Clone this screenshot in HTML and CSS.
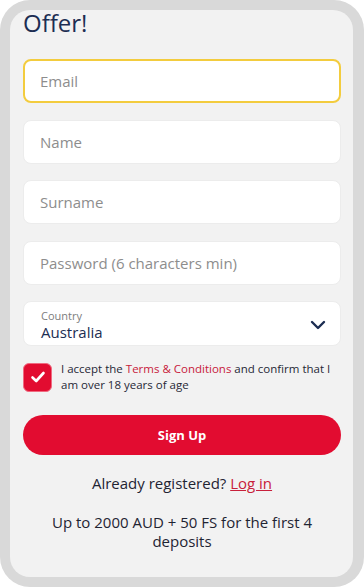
FILE: index.html
```html
<!DOCTYPE html>
<html lang="en">
<head>
<meta charset="utf-8">
<link rel="stylesheet" href="styles.css">
</head>
<body>
<div class="frame">
  <div class="panel">
    <h1 class="title">Offer!</h1>
    <div class="fields">
      <input class="field field--active" type="text" placeholder="Email">
      <input class="field" type="text" placeholder="Name">
      <input class="field" type="text" placeholder="Surname">
      <input class="field" type="text" placeholder="Password (6 characters min)">
      <div class="select">
        <div class="select-text">
          <span class="select-label">Country</span>
          <span class="select-value">Australia</span>
        </div>
        <svg class="chevron" width="16" height="10" viewBox="0 0 16 10"><path d="M2 2 L8 8 L14 2" fill="none" stroke="#1c2d52" stroke-width="2.4" stroke-linecap="round" stroke-linejoin="round"/></svg>
      </div>
    </div>
    <div class="consent">
      <span class="checkbox">
        <svg width="16" height="14" viewBox="0 0 16 14"><path d="M2.5 7.5 L6.2 11 L13.5 3" fill="none" stroke="#fff" stroke-width="2.6" stroke-linecap="round" stroke-linejoin="round"/></svg>
      </span>
      <p class="consent-text">I accept the <a class="link" href="#">Terms &amp; Conditions</a> and confirm that I am over 18 years of age</p>
    </div>
    <button class="signup" type="button">Sign Up</button>
    <p class="login">Already registered? <a class="login-link" href="#">Log in</a></p>
    <p class="bonus">Up to 2000 AUD + 50 FS for the first 4 deposits</p>
  </div>
</div>
</body>
</html>
```

FILE: styles.css
```css
* { box-sizing: border-box; }
html, body { margin: 0; padding: 0; background: #ffffff; }
body { font-family: "Open Sans", "Noto Sans", sans-serif; }

.frame {
  width: 364px;
  height: 587px;
  background: #d9d9d9;
  border-radius: 30px;
  padding: 10px 11px 10px 10px;
}
.panel {
  height: 567px;
  background: #f2f2f2;
  border-radius: 20px;
  padding: 0 12px 0 13px;
}
.title {
  margin: 0;
  font-size: 24px;
  line-height: 26px;
  font-weight: 400;
  color: #1c2d52;
}
.fields {
  margin-top: 23px;
  display: flex;
  flex-direction: column;
  gap: 16.5px;
}
.field {
  display: block;
  width: 100%;
  height: 44px;
  border: 1px solid #ececec;
  border-radius: 8px;
  background: #ffffff;
  padding: 0 16px;
  font-family: inherit;
  font-size: 15px;
  color: #333;
  outline: none;
}
.field::placeholder { color: #8d8d8d; }
.field--active { border: 2px solid #f3cc3e; padding: 0 15px; }

.select {
  height: 45px;
  background: #ffffff;
  border: 1px solid #ececec;
  border-radius: 8px;
  display: flex;
  align-items: center;
  justify-content: space-between;
  padding: 2px 14px 0 17px;
}
.select-text { display: flex; flex-direction: column; }
.select-label { font-size: 11px; line-height: 15px; color: #7d7d7d; }
.select-value { font-size: 15px; line-height: 19px; color: #1c2d52; }

.consent {
  margin-top: 15px;
  display: flex;
  align-items: center;
  gap: 9px;
}
.checkbox {
  flex: none;
  width: 29px;
  height: 29px;
  border-radius: 6px;
  background: #e20c30;
  border: 1px solid #f06a80;
  display: flex;
  align-items: center;
  justify-content: center;
}
.consent-text {
  margin: 0;
  font-size: 11.5px;
  line-height: 16px;
  color: #262836;
}
.link { color: #c8203b; text-decoration: none; }

.signup {
  display: block;
  width: 100%;
  margin-top: 22px;
  height: 40px;
  border: none;
  border-radius: 20px;
  background: #e20c30;
  color: #ffffff;
  font-family: inherit;
  font-size: 13px;
  font-weight: 700;
}
.login {
  margin: 18px 0 0;
  text-align: center;
  font-size: 15px;
  line-height: 20px;
  color: #1f2433;
}
.login-link { color: #c8203b; text-decoration: underline; }
.bonus {
  margin: 20px 0 0;
  text-align: center;
  font-size: 15px;
  line-height: 19px;
  color: #1f2433;
  padding: 0 20px;
}
```
